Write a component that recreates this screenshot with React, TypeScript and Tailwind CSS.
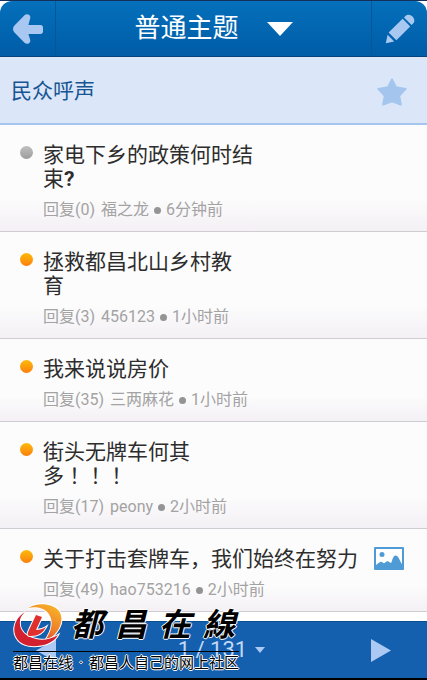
import clsx from 'clsx'

type Topic = {
  id: number
  title: string[]
  replies: number
  author: string
  time: string
  unread: boolean
  hasImage?: boolean
}

const topics: Topic[] = [
  { id: 1, title: ['家电下乡的政策何时结', '束?'], replies: 0, author: '福之龙', time: '6分钟前', unread: false },
  { id: 2, title: ['拯救都昌北山乡村教', '育'], replies: 3, author: '456123', time: '1小时前', unread: true },
  { id: 3, title: ['我来说说房价'], replies: 35, author: '三两麻花', time: '1小时前', unread: true },
  { id: 4, title: ['街头无牌车何其', '多！！！'], replies: 17, author: 'peony', time: '2小时前', unread: true },
  {
    id: 5,
    title: ['关于打击套牌车，我们始终在努力'],
    replies: 49,
    author: 'hao753216',
    time: '2小时前',
    unread: true,
    hasImage: true,
  },
]

const OUTLINE =
  '[text-shadow:1px_0_#fff,-1px_0_#fff,0_1px_#fff,0_-1px_#fff]'

function BackIcon() {
  return (
    <svg width="30" height="30" viewBox="0 0 30 30" fill="#a9c8f1" aria-hidden="true">
      <path d="M11.5 1.2C14-1 18 .8 17.2 4.2L15.4 11H27.5c1.6 0 2.5 1 2.5 2.5v4c0 1.5-.9 2.5-2.5 2.5H15.4l1.8 5.8c.8 3.4-3.2 5.2-5.7 3L1 18c-1.3-1.6-1.3-4.4 0-6z" />
    </svg>
  )
}

function PencilIcon() {
  return (
    <svg width="30" height="30" viewBox="0 0 30 30" fill="#a9c8f1" aria-hidden="true">
      <path d="M.8 29.2l1.8-8.4 6.6 6.6z" />
      <path d="M3.6 18.6L17.6 4.8l7.6 7.6-13.8 13.8z" />
      <path d="M19 3.4l1.7-1.7c2-1.7 4.9-1 6.8.9s2.6 4.8.8 6.7L26.6 11z" />
    </svg>
  )
}

function StarIcon() {
  return (
    <svg width="30" height="28" viewBox="0 0 30 28" fill="#a4c6ee" stroke="#a4c6ee" strokeWidth="2" strokeLinejoin="round" aria-hidden="true">
      <path d="M15 1.5l4 7.7 9.6 1.7-6.4 6.8 1.6 8.8L15 23.4l-8.8 3.1 1.6-8.8-6.4-6.8L11 9.2z" />
    </svg>
  )
}

function ImageIcon() {
  return (
    <svg className="shrink-0" width="30" height="23" viewBox="0 0 30 23" role="img" aria-label="图片">
      <rect width="30" height="23" rx="1" fill="#4f9bd5" />
      <rect x="2" y="2" width="26" height="19" fill="#fff" />
      <circle cx="8" cy="7.5" r="2.5" fill="#4f9bd5" />
      <path d="M2 21v-3c2-1 3-3 5-3.200 1.500 0 2 1.400 3 1.400s2-2.400 4-2c1.500.4 2 1.800 2.800 1.800C18 16 18.500 8.500 21.500 8.500c3 0 4 5 6.500 8.500v4z" fill="#4f9bd5" />
    </svg>
  )
}

function BrandMark() {
  return (
    <svg width="50" height="46" viewBox="0 0 50 46" aria-hidden="true">
      <defs>
        <linearGradient id="ring" x1="0.3" y1="1" x2="0.8" y2="0">
          <stop offset="0" stopColor="#dc3a28" />
          <stop offset="0.4" stopColor="#ee7a28" />
          <stop offset="1" stopColor="#f9b529" />
        </linearGradient>
      </defs>
      <g stroke="#fff" strokeWidth="2" paintOrder="stroke">
        <path
          d="M15 5C24-1 40 0 46 8c7 11-2 25-15 31 6-8 10-18 6-26C33 5 24 3 15 5z"
          fill="url(#ring)"
        />
        <path
          d="M12 9C2 15-1 26 3 34c5 10 19 11 31 7 5-2 9-5 11-9-7 4-15 6-22 4C11 33 6 26 7 18c0-4 3-7 5-9z"
          fill="#d3202f"
        />
        <path d="M23 12l6 2-6 13c4 0 7-1 10-3-3 6-8 9-15 9-4 0-4-2-2-6z" fill="#e0302d" />
      </g>
    </svg>
  )
}

function Triangle({ direction }: { direction: 'left' | 'right' }) {
  return (
    <svg width="20" height="23" viewBox="0 0 20 23" fill="#abc9f3" aria-hidden="true">
      <path d={direction === 'left' ? 'M20 0v23L0 11.5z' : 'M0 0v23l20-11.5z'} />
    </svg>
  )
}

function Header() {
  return (
    <header className="flex h-14 rounded-t-xl border-b border-[#06427c] bg-linear-to-b from-[#0570bb] to-[#005ca7]">
      <button type="button" aria-label="返回" className="flex w-14 items-center justify-center border-r border-[#0a5594]">
        <BackIcon />
      </button>
      <button type="button" className="flex flex-1 items-center justify-center gap-7 text-[26px] text-white">
        普通主题
        <svg width="26" height="14" viewBox="0 0 26 14" fill="#fff" aria-hidden="true">
          <path d="M0 0h26L13 14z" />
        </svg>
      </button>
      <button type="button" aria-label="发帖" className="flex w-14 items-center justify-center border-l border-[#0a5594]">
        <PencilIcon />
      </button>
    </header>
  )
}

function TitleLine({ text }: { text: string }) {
  return (
    <span className="block whitespace-nowrap">
      {text.split(/([?]|！+)/).map((part, i) => {
        if (part === '?') return <b key={i}>?</b>
        // the TC face centres the full-width mark in its cell
        if (part.startsWith('！')) {
          return (
            <span key={i} lang="zh-TW" className="font-['Noto_Sans_CJK_TC',sans-serif] leading-none">
              {part}
            </span>
          )
        }
        return part
      })}
    </span>
  )
}

function TopicRow({ topic }: { topic: Topic }) {
  return (
    <li className="border-b border-[#cfcdd2] bg-linear-to-b from-[#fcfcfc] from-70% to-[#f4f0f5]">
      <a href="#" className="flex gap-2.5 pt-[18px] pb-2.5 pl-5">
        <span
          className={clsx(
            'mt-[3px] size-[13px] shrink-0 rounded-full bg-linear-to-b',
            topic.unread ? 'from-[#fcba0a] to-[#fb7f0c]' : 'from-[#c0c0c0] to-[#9c9c9c]'
          )}
        />
        <div className="min-w-0">
          <h2 className="flex gap-4 text-[21px] leading-6 text-[#2d2d2d]">
            <span>
              {topic.title.map((line) => (
                <TitleLine key={line} text={line} />
              ))}
            </span>
            {topic.hasImage && <ImageIcon />}
          </h2>
          <p className="mt-2 flex items-center text-base leading-[22px] text-[#a3a3a3]">
            <span className="mr-1.5">回复({topic.replies})</span>
            <span>{topic.author}</span>
            <span className="mx-[5px] size-[7px] rounded-full bg-[#949494]" />
            <span>{topic.time}</span>
          </p>
        </div>
      </a>
    </li>
  )
}

function Watermark() {
  return (
    <div className="pointer-events-none absolute bottom-1 left-[13px] w-[226px] text-black">
      <div className="flex items-start justify-between border-b border-black pr-1 pb-0.5">
        <BrandMark />
        <div className={clsx('flex gap-3 text-[32px] leading-[44px] font-bold italic', OUTLINE)}>
          {['都', '昌', '在', '線'].map((char) => (
            <span key={char}>{char}</span>
          ))}
        </div>
      </div>
      <p className={clsx('flex justify-between text-[15px] leading-[22px] whitespace-nowrap', OUTLINE)}>
        <span>都昌在线</span>
        <span>·</span>
        <span>都昌人自己的网上社区</span>
      </p>
    </div>
  )
}

function Footer() {
  return (
    <footer className="relative flex h-[59px] items-center justify-between border-t border-b-2 border-t-[#07508f] border-b-black bg-[#145fae] px-9">
      <button type="button" aria-label="上一页">
        <Triangle direction="left" />
      </button>
      <button type="button" className="flex items-center gap-2 pl-4 text-[22px] leading-6 text-[#c3d9f7]">
        1 / 131
        <svg width="10" height="6" viewBox="0 0 10 6" fill="#abc9f3" aria-hidden="true">
          <path d="M0 0h10L5 6z" />
        </svg>
      </button>
      <button type="button" aria-label="下一页">
        <Triangle direction="right" />
      </button>
      <Watermark />
    </footer>
  )
}

export default function App() {
  return (
    <div className="flex min-h-screen flex-col border-t border-[#14305a] bg-white font-[Roboto,'Noto_Sans_CJK_SC',sans-serif]">
      <Header />
      <div className="flex h-[68px] items-center justify-between border-b-2 border-[#a5c5ee] bg-[#dbe6f9] pt-1 pr-5 pl-[11px]">
        <h1 className="text-[21px] text-[#165592]">民众呼声</h1>
        <button type="button" aria-label="收藏">
          <StarIcon />
        </button>
      </div>
      <main className="flex-1">
        <ul>
          {topics.map((topic) => (
            <TopicRow key={topic.id} topic={topic} />
          ))}
        </ul>
      </main>
      <Footer />
    </div>
  )
}
